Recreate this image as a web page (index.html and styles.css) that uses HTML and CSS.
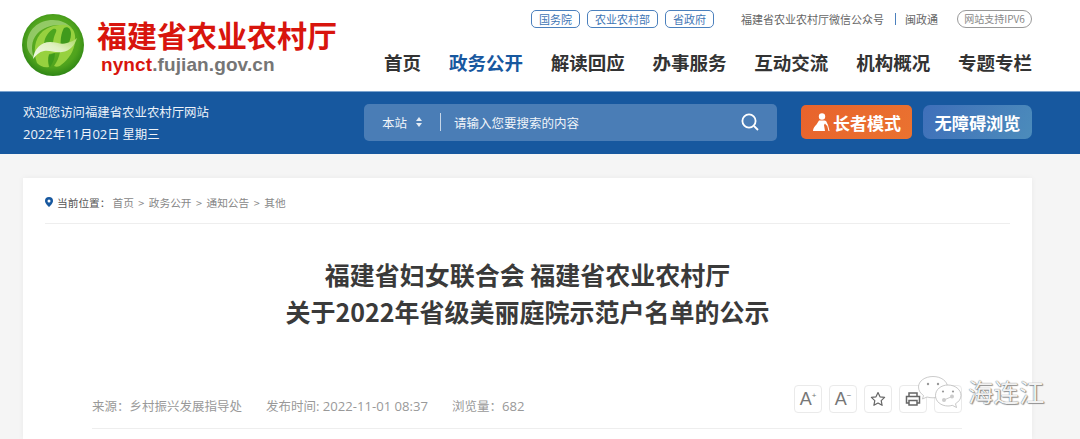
FILE: index.html
```
<!DOCTYPE html>
<html lang="zh-CN">
<head>
<meta charset="utf-8">
<title>福建省农业农村厅</title>
<link rel="stylesheet" href="styles.css">
</head>
<body>
<header class="header">
  <div class="brand">
    <svg class="logo" width="62" height="62" viewBox="0 0 62 62">
      <defs>
        <radialGradient id="g" cx="50%" cy="45%" r="55%">
          <stop offset="0" stop-color="#66b626"/><stop offset=".75" stop-color="#4fa31d"/><stop offset="1" stop-color="#2f8615"/>
        </radialGradient>
        <linearGradient id="leaf" x1="0" y1="1" x2="1" y2="0">
          <stop offset="0" stop-color="#f4faea"/><stop offset=".55" stop-color="#dff0c0"/><stop offset="1" stop-color="#a9d95e"/>
        </linearGradient>
      </defs>
      <circle cx="31" cy="31" r="31" fill="url(#g)"/>
      <path d="M5 31C5 16 16 6 31 6c8 0 14 3 19 8C40 9 24 10 15 20 9 27 9 36 12 44 8 40 5 36 5 31z" fill="#c6e6a0" opacity=".55"/>
      <path d="M15 49c-4-11-3-24 6-32 7-5 15-7 23-6 8 2 10 9 9 17-1 9-6 17-14 23-2 2-5 2-7 1 3-4 5-9 6-14l-11 2c-1 5-1 9 0 13-5 1-9-1-12-4z" fill="#97d13f"/>
      <path d="M22 31c0-6 3-12 9-16 3-1 4 1 3 3-2 4-3 8-3 12z" fill="#4ca51f"/>
      <path d="M42 14c4-2 7 1 7 6 0 5-2 9-5 13l-5 1c-1-7 0-15 3-20z" fill="#3f9a1c"/>
      <path d="M28 53c-2-4-2-8-1-12l6-2c0 5-2 10-5 14z" fill="#3f9a1c"/>
      <path d="M11 45c1-10 8-17 17-17 7 0 11 3 17 1 4-1 8-3 10-5-2 7-7 13-15 14-7 1-12-2-18-1-5 1-8 4-11 8z" fill="url(#leaf)"/>
    </svg>
    <div class="brand-text">
      <div class="brand-title">福建省农业农村厅</div>
      <div class="brand-url"><span class="brand-red">nynct</span>.fujian.gov.cn</div>
    </div>
  </div>
  <div class="head-right">
    <div class="toplinks">
      <a class="tag">国务院</a>
      <a class="tag">农业农村部</a>
      <a class="tag">省政府</a>
      <span class="wechat">福建省农业农村厅微信公众号</span>
      <span class="sep"></span>
      <span class="minzheng">闽政通</span>
      <span class="ipv6">网站支持IPV6</span>
    </div>
    <nav class="nav">
      <a>首页</a>
      <a class="active">政务公开</a>
      <a>解读回应</a>
      <a>办事服务</a>
      <a>互动交流</a>
      <a>机构概况</a>
      <a>专题专栏</a>
    </nav>
  </div>
</header>

<section class="band">
  <div class="welcome">
    <div>欢迎您访问福建省农业农村厅网站</div>
    <div><span class="num">2022</span>年<span class="num">11</span>月<span class="num">02</span>日&nbsp;星期三</div>
  </div>
  <div class="search">
    <span class="scope">本站</span>
    <svg class="updown" width="6" height="10" viewBox="0 0 6 10"><path d="M3 0l3 4H0zM3 10L0 6h6z" fill="#e4ecf5"/></svg>
    <span class="divider"></span>
    <span class="placeholder">请输入您要搜索的内容</span>
    <svg class="magnifier" width="18" height="18" viewBox="0 0 18 18" fill="none" stroke="#fff" stroke-width="1.8"><circle cx="8" cy="8" r="6.6"/><path d="M13 13l4 4"/></svg>
  </div>
  <a class="btn btn-orange">
    <svg width="18" height="18" viewBox="0 0 18 18"><circle cx="10" cy="3.500" r="3.200" fill="#fff"/><path d="M7 7.500h5.500c1.500 0 2 1 2.500 2.500l1 2-1.500.6-1.500-2.100-1 1.500 1 6H1c0-3 2-5 3.500-6.500z" fill="#fff"/><path d="M15.500 12l1.500 6" stroke="#fff" stroke-width="1"/></svg>
    长者模式
  </a>
  <a class="btn btn-blue">无障碍浏览</a>
</section>

<main class="page">
  <article class="card">
    <div class="crumbs">
      <svg width="8" height="10" viewBox="0 0 8 10"><path d="M4 0a4 4 0 0 1 4 4c0 2.500-4 6-4 6S0 6.500 0 4a4 4 0 0 1 4-4z" fill="#17589f"/><circle cx="4" cy="4" r="1.500" fill="#fff"/></svg>
      <span class="crumb-lead">当前位置：</span>
      <span>首页</span><span class="gt">&gt;</span><span>政务公开</span><span class="gt">&gt;</span><span>通知公告</span><span class="gt">&gt;</span><span>其他</span>
    </div>
    <h1 class="title">福建省妇女联合会 福建省农业农村厅<br>关于2022年省级美丽庭院示范户名单的公示</h1>
    <div class="meta">
      <div class="meta-text">
        <span>来源：乡村振兴发展指导处</span>
        <span>发布时间<span class="num">: 2022-11-01 08:37</span></span>
        <span>浏览量：<span class="num">682</span></span>
      </div>
      <div class="tools">
        <span class="tool">A<sup>+</sup></span>
        <span class="tool">A<sup>−</sup></span>
        <span class="tool">
          <svg width="16" height="16" viewBox="0 0 16 16" fill="none" stroke="#666" stroke-width="1.200"><path d="M8 1.500l2 4.300 4.600.6-3.400 3.200.9 4.700L8 12l-4.100 2.300.9-4.700L1.400 6.400 6 5.800z" stroke-linejoin="round"/></svg>
        </span>
        <span class="tool">
          <svg width="16" height="16" viewBox="0 0 16 16" fill="none" stroke="#666" stroke-width="1.500"><path d="M4 5V2h8v3M4 12H1.500V5.500h13V12H12"/><path d="M4 9.500h8V14H4z"/></svg>
        </span>
        <span class="tool"></span>
      </div>
    </div>
  </article>
</main>

<div class="watermark">
  <svg width="44" height="32" viewBox="0 0 44 32">
    <path d="M15 .5C7 .5.500 5 .500 11c0 3.500 2 6.500 5 8.500l-1 3.500 4.500-2c2 .6 4 .8 6 .8 8 0 14.500-5 14.500-10.800S23 .5 15 .5z" fill="#fff" stroke="#b5b5b5" stroke-width=".7"/>
    <circle cx="10" cy="8" r="1.200" fill="#999"/><circle cx="20" cy="8" r="1.200" fill="#999"/>
    <path d="M30 9c-7 0-12.500 4.500-12.500 10.500S23 30 30 30c1.600 0 3-.2 4.300-.7l4.200 2.200-1-3.800c3.300-2 5.500-4.800 5.500-8.200C43 13.500 37 9 30 9z" fill="#fff" stroke="#b0b0b0" stroke-width=".7"/>
    <circle cx="25" cy="15.500" r="1.100" fill="#999"/><circle cx="35" cy="15.500" r="1.100" fill="#999"/>
    <path d="M26 24l8-3.500" stroke="#ccc" stroke-width="1"/><circle cx="26" cy="24" r="2" fill="#ccc"/><circle cx="34" cy="20.500" r="2" fill="#ccc"/>
  </svg>
  <span class="wm-name">海连江</span>
</div>
</body>
</html>
```

FILE: styles.css
```
* { box-sizing: border-box; }
html, body { margin: 0; padding: 0; height: 439px; overflow: hidden; }
body {
  background: #f5f5f5;
  font-family: "Noto Sans CJK SC", "Liberation Sans", sans-serif;
  color: #333;
  position: relative;
}
.num { font-family: "Open Sans", "Liberation Sans", sans-serif; }
.header {
  height: 91px;
  background: #fff;
  padding: 0 48px 0 22px;
  display: flex;
  justify-content: space-between;
}
.brand { display: flex; align-items: flex-start; padding-top: 14px; }
.logo { flex: none; }
.brand-text { margin-left: 13px; }
.brand-title {
  font-size: 30px;
  line-height: 30px;
  margin-top: 5px;
  font-weight: 700;
  color: #d8150d;
  white-space: nowrap;
}
.brand-url {
  font-family: "Liberation Sans", sans-serif;
  font-size: 19px;
  line-height: 22px;
  margin: 5px 0 0 4px;
  letter-spacing: .1px;
  font-weight: 700;
  color: #757575;
}
.brand-red { color: #d8150d; }
.head-right { display: flex; flex-direction: column; align-items: flex-end; }
.toplinks {
  display: flex;
  align-items: center;
  height: 18px;
  margin-top: 10px;
  font-size: 11px;
  line-height: 16px;
  color: #666;
  white-space: nowrap;
}
.tag {
  height: 18px;
  padding: 0 7px;
  border: 1px solid #4b80bd;
  border-radius: 5px;
  color: #3f76b5;
  margin-right: 7px;
}
.wechat { margin-left: 20px; }
.sep { width: 1px; height: 12px; background: #4b80bd; margin: 0 9px 0 11px; }
.ipv6 {
  margin-left: 19px;
  width: 75px;
  height: 18px;
  text-align: center;
  border: 1px solid #999;
  border-radius: 9px;
  font-size: 10px;
  color: #888;
}
.nav {
  display: flex;
  gap: 27.800px;
  margin-top: 20px;
  font-size: 18.500px;
  line-height: 28px;
  font-weight: 700;
  color: #333;
  white-space: nowrap;
}
.nav .active { color: #17589f; }
.band {
  height: 63px;
  background: #17589f;
  border-top: 1px solid #7ba3cf;
  padding: 0 48px 2px 23px;
  display: flex;
  align-items: center;
  color: #fff;
}
.welcome { width: 341px; margin-top: 2px; font-size: 12.400px; line-height: 22px; color: #eef3f9; }
.welcome .num { font-size: 13px; }
.search {
  width: 413px;
  height: 37px;
  border-radius: 5px;
  background: #4a7db6;
  display: flex;
  align-items: center;
  padding: 0 18px 0 18px;
  font-size: 12.500px;
  color: #f0f4f9;
}
.updown { margin-left: 9px; }
.divider { width: 1px; height: 18px; background: #c6d6e8; margin: 0 13px 0 18px; }
.placeholder { flex: 1; }
.btn {
  height: 34px;
  border-radius: 5px;
  display: flex;
  align-items: center;
  justify-content: center;
  font-size: 17px;
  font-weight: 700;
  color: #fff;
  white-space: nowrap;
}
.btn-orange {
  width: 111px;
  margin-left: 24px;
  gap: 3px;
  background: linear-gradient(120deg, #e8632c, #ea7230);
}
.btn-blue {
  width: 109px;
  margin-left: 11px;
  border-radius: 7px;
  font-size: 17.200px;
  background: linear-gradient(120deg, #3f6fba, #4c8cbb);
}
.page { padding: 24px 48px 0 23px; }
.card {
  background: #fff;
  height: 261px;
  padding: 0 22px;
  box-shadow: 0 0 6px rgba(0, 0, 0, .05);
}
.crumbs {
  display: flex;
  align-items: center;
  height: 46px;
  padding: 3px 0 0 0;
  border-bottom: 1px solid #eee;
  font-size: 10.700px;
  color: #888;
  white-space: nowrap;
}
.crumb-lead { color: #555; margin: 0 2px 0 4px; }
.gt { margin: 0 4.500px; }
.title {
  margin: 32px 0 0;
  text-align: center;
  font-size: 25px;
  line-height: 37px;
  font-weight: 700;
  color: #3a3a3a;
}
.meta {
  margin: 55px 48px 0 47px;
  height: 44px;
  border-bottom: 1px solid #eee;
  display: flex;
  justify-content: space-between;
  align-items: flex-start;
}
.meta-text {
  display: flex;
  gap: 24px;
  font-size: 12.500px;
  line-height: 18px;
  margin-top: 12px;
  color: #999;
  white-space: nowrap;
}
.meta-text .num { font-size: 13.100px; }
.tools { display: flex; gap: 7px; }
.tool {
  width: 28px;
  height: 28px;
  border: 1px solid #eaeaea;
  border-radius: 4px;
  display: flex;
  align-items: center;
  justify-content: center;
  font-family: "Liberation Sans", sans-serif;
  font-size: 18px;
  color: #777;
}
.tool sup { font-size: 8px; line-height: 1; align-self: flex-start; margin-top: 6px; }
.watermark {
  position: absolute;
  left: 918px;
  top: 376px;
  display: flex;
  align-items: flex-start;
  gap: 6px;
}
.wm-name {
  font-size: 25.500px;
  line-height: 30px;
  color: #f2f2f2;
  text-shadow: 0 0 1px #444, 1px 1px 1px #999;
}
```
